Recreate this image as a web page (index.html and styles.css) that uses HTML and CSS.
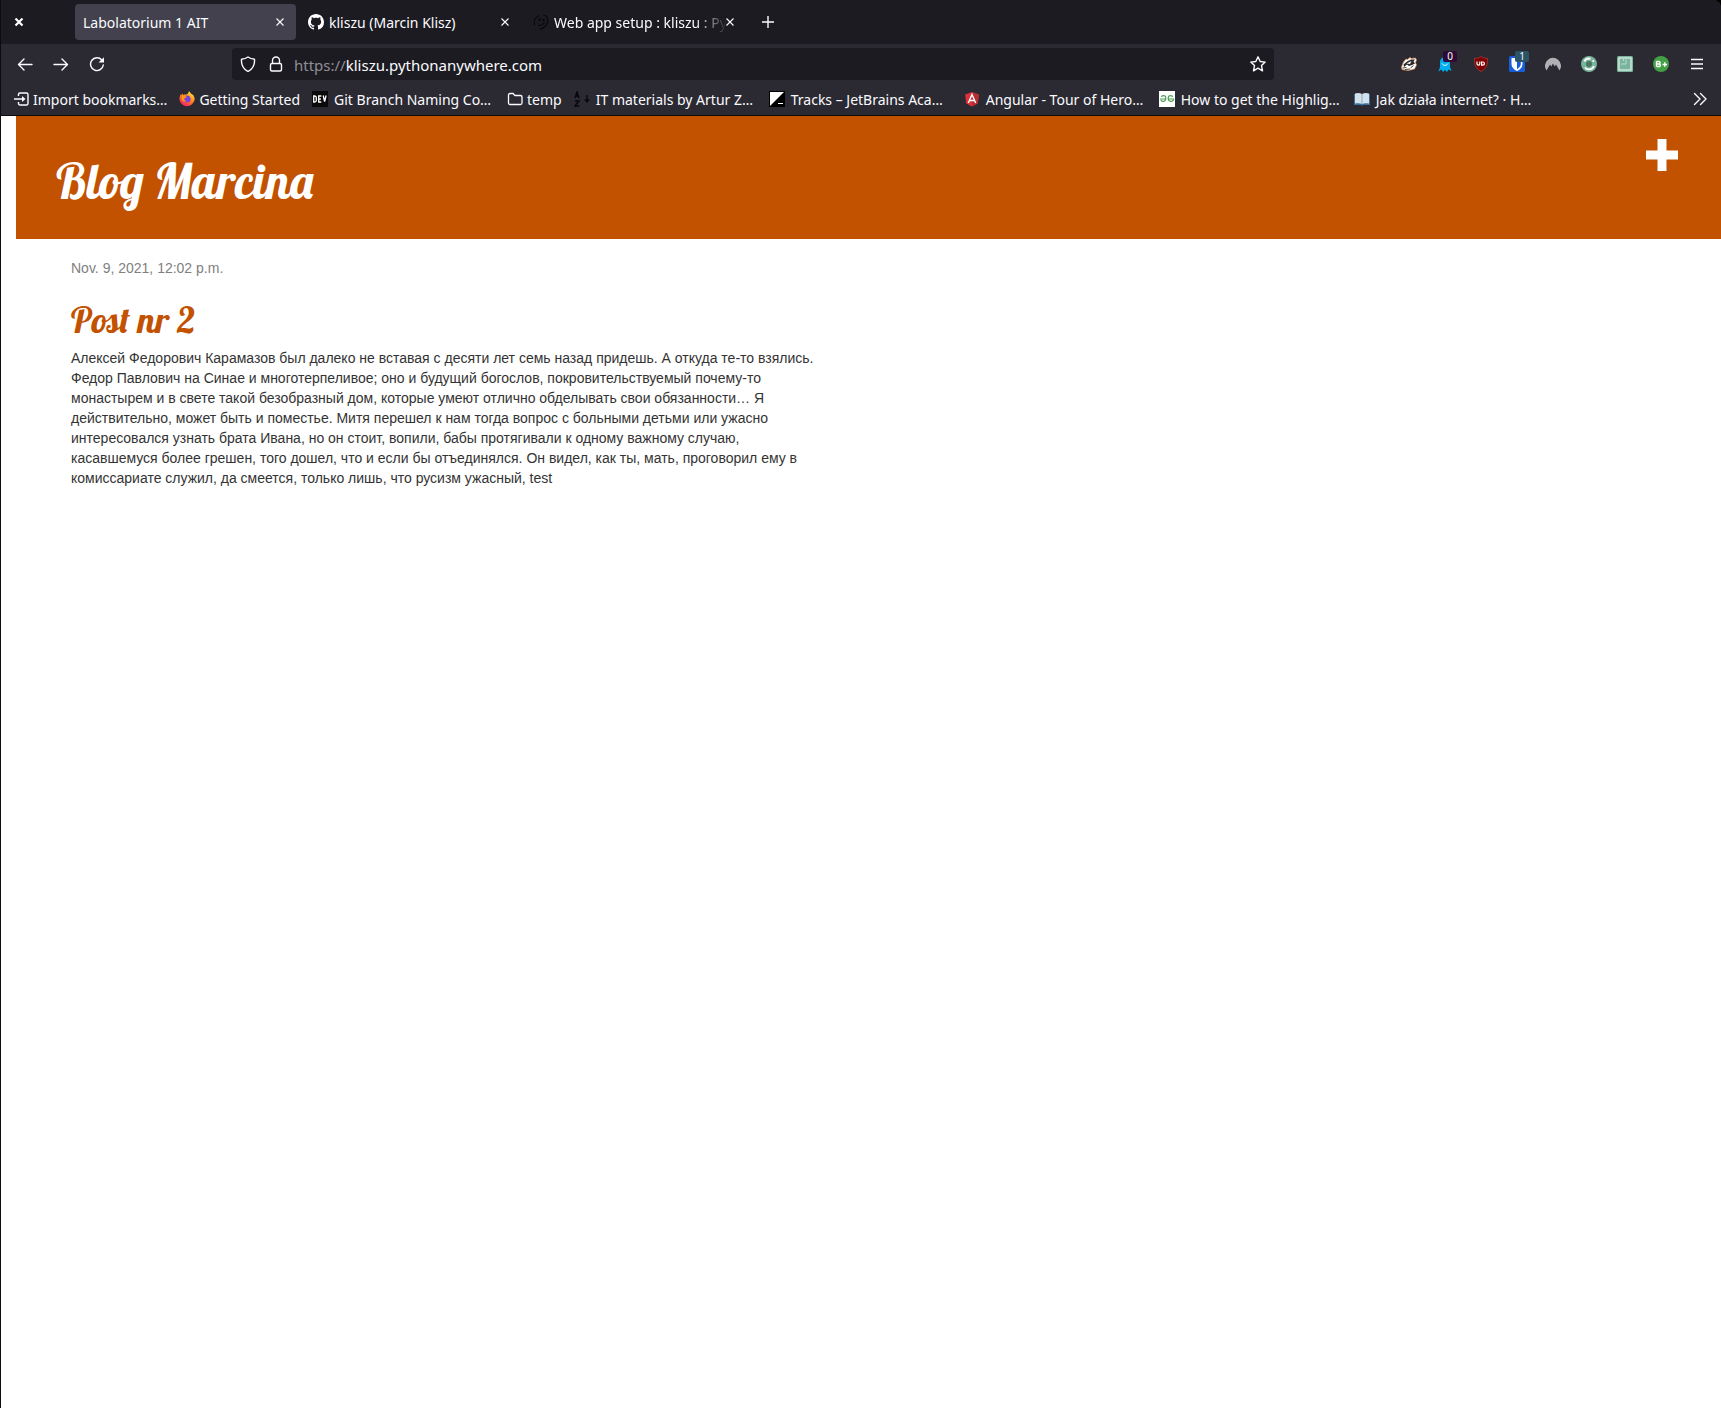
FILE: index.html
```html
<!DOCTYPE html>
<html lang="en">
<head>
<meta charset="utf-8">
<title>Labolatorium 1 AIT</title>
<link rel="stylesheet" href="styles.css">
</head>
<body>
<div class="window">
  <header class="chrome">
    <div class="tabstrip">
      <button class="window-close" aria-label="Close window"><svg width="10" height="10" viewBox="0 0 10 10"><path d="M1.500 1.500l7 7M8.500 1.500l-7 7" stroke="#fff" stroke-width="2.200"/></svg></button>
      <div class="tabs">
        <div class="tab tab-active">
          <span class="tab-title">Labolatorium 1 AIT</span>
          <button class="tab-close" aria-label="Close tab"><svg width="8" height="8" viewBox="0 0 8 8"><path d="M.5.5l7 7M7.500.5l-7 7" stroke="#fbfbfe" stroke-width="1.100"/></svg></button>
        </div>
        <div class="tab">
          <svg class="icon" viewBox="0 0 16 16"><path fill="#fff" d="M8 0C3.580 0 0 3.580 0 8c0 3.540 2.290 6.530 5.470 7.590.4.070.55-.17.55-.38 0-.19-.01-.82-.01-1.490-2.010.37-2.530-.49-2.690-.94-.09-.23-.48-.94-.82-1.130-.28-.15-.68-.52-.01-.53.63-.01 1.080.58 1.230.82.72 1.210 1.870.87 2.330.66.070-.52.28-.87.51-1.070-1.780-.2-3.640-.89-3.640-3.950 0-.87.31-1.590.82-2.150-.08-.2-.36-1.020.08-2.120 0 0 .67-.21 2.200.82.64-.18 1.320-.27 2-.27s1.360.09 2 .27c1.530-1.040 2.200-.82 2.200-.82.44 1.100.16 1.920.08 2.120.51.56.82 1.270.82 2.150 0 3.070-1.870 3.750-3.650 3.950.29.25.54.73.54 1.480 0 1.070-.01 1.930-.01 2.200 0 .21.15.46.55.38A8.010 8.010 0 0 0 16 8c0-4.420-3.580-8-8-8z"/></svg>
          <span class="tab-title">kliszu (Marcin Klisz)</span>
          <button class="tab-close" aria-label="Close tab"><svg width="8" height="8" viewBox="0 0 8 8"><path d="M.5.5l7 7M7.500.5l-7 7" stroke="#fbfbfe" stroke-width="1.100"/></svg></button>
        </div>
        <div class="tab">
          <svg class="icon" viewBox="0 0 16 16" fill="none" stroke="#08080a" stroke-width="1.200"><path d="M6 1.500C2.500 3 .5 7 1.500 11.500M10 1c4 0 5.500 4 4.500 7.500-1 3.500-4.500 6-8 6.500M5 11.500l4-.5 2.500-2.500"/><circle cx="6.500" cy="5.500" r=".7" fill="#08080a"/><circle cx="10.500" cy="6" r=".7" fill="#08080a"/></svg>
          <span class="tab-title tab-title-fade">Web app setup : kliszu : Py</span>
          <button class="tab-close" aria-label="Close tab"><svg width="8" height="8" viewBox="0 0 8 8"><path d="M.5.5l7 7M7.500.5l-7 7" stroke="#fbfbfe" stroke-width="1.100"/></svg></button>
        </div>
      </div>
      <button class="new-tab" aria-label="New tab"><svg width="12" height="12" viewBox="0 0 12 12"><path d="M6 0v12M0 6h12" stroke="#fbfbfe" stroke-width="1.400"/></svg></button>
    </div>

    <div class="navbar">
      <button class="tool" aria-label="Back"><svg class="icon" viewBox="0 0 16 16" fill="none" stroke="#fbfbfe" stroke-width="1.400" stroke-linecap="round" stroke-linejoin="round"><path d="M15 8.500H1.500M7 3L1.500 8.500 7 14"/></svg></button>
      <button class="tool" aria-label="Forward"><svg class="icon" viewBox="0 0 16 16" fill="none" stroke="#fbfbfe" stroke-width="1.400" stroke-linecap="round" stroke-linejoin="round"><path d="M1 8.500h13.500M9 3l5.500 5.500L9 14"/></svg></button>
      <button class="tool" aria-label="Reload"><svg class="icon" viewBox="0 0 16 16"><path d="M12.800 4A6.400 6.400 0 1 0 14.300 9" fill="none" stroke="#fbfbfe" stroke-width="1.400" stroke-linecap="round"/><path d="M15 1.300v5.200H9.500z" fill="#fbfbfe"/></svg></button>
      <div class="urlbar">
        <svg class="icon" viewBox="0 0 16 16" fill="none" stroke="#fbfbfe" stroke-width="1.400" stroke-linejoin="round"><path d="M8 1c2 1.400 4.200 2 6.500 2.200C15 9 12.500 13 8 15.500 3.500 13 1 9 1.500 3.200 3.800 3 6 2.400 8 1z"/></svg>
        <svg class="icon" viewBox="0 0 16 16" fill="none" stroke="#fbfbfe" stroke-width="1.400"><rect x="2.500" y="7.500" width="11" height="7.500" rx="1.500"/><path d="M4.500 7.500V4.500a3.500 3.500 0 0 1 7 0v3"/></svg>
        <a class="url" href="https://kliszu.pythonanywhere.com"><span class="url-scheme">https://</span>kliszu.pythonanywhere.com</a>
        <svg class="icon" viewBox="0 0 16 16" fill="none" stroke="#fbfbfe" stroke-width="1.400" stroke-linejoin="round"><path d="M8 .8l2.200 4.700 5 .6-3.700 3.500 1 5.200L8 12.200l-4.500 2.600 1-5.200L.8 6.100l5-.6z"/></svg>
      </div>
      <button class="tool" aria-label="Privacy Badger"><svg class="icon" viewBox="0 0 16 16"><path d="M.5 11L2.500 6 5 3l1.500.5L9 1.500l1.500 1L14.500 2l1 2-1 2.500 1 2.500-2 4-4 1L7 14.500 1 13.500z" fill="#fff" stroke="#e08b4a" stroke-width=".7"/><path d="M2.500 8.500L6 5.500l4-2 4 0-1.500 2L14 7.500 11 9 8 10l-2-1.500L3 11z" fill="#2b2a2a"/><path d="M5.500 7.500l5-2.500-1.500 3z" fill="#fff"/><path d="M1.500 12l4-.5M9.500 12l3-2.500M4 13.500l5-.5" stroke="#444" fill="none"/></svg></button>
      <button class="tool" aria-label="Ghostery"><svg class="icon" viewBox="0 0 16 16"><path d="M3 6a5 5 0 0 1 10 0v5l1.500 4-3-1.500L10 16l-2-2-2 2-1.500-2.500-3 2L3 11z" fill="#00aef0"/><path d="M5 7.500c1.500 2.500 4.500 2.500 6 0" stroke="#fff" fill="none"/></svg><span class="badge badge-purple">0</span></button>
      <button class="tool" aria-label="uBlock Origin"><svg class="icon" viewBox="0 0 16 16"><path d="M8 .5c2 1.300 4 1.800 6.500 1.800 0 6.500-.5 9.700-6.500 13.200C2 12 1.500 8.800 1.500 2.300 4 2.300 6 1.800 8 .5z" fill="#800000" stroke="#a64040" stroke-width=".7"/><path d="M4 5.500v2.300a1.400 1.400 0 0 0 2.800 0V5.500M8.600 6v3.200h1.200a1.600 1.600 0 0 0 0-3.200z" fill="none" stroke="#fff" stroke-width="1.200"/></svg></button>
      <button class="tool" aria-label="Bitwarden"><svg class="icon" viewBox="0 0 16 16"><rect width="16" height="16" rx="1.500" fill="#175ddc"/><path d="M2.500 2h11v6c0 3-2 5.500-5.500 7C4.500 13.500 2.500 11 2.500 8z" fill="#fff"/><path d="M8 3.500h3.800V8c0 2-1.600 3.900-3.800 5.200z" fill="#175ddc"/></svg><span class="badge badge-teal">1</span></button>
      <button class="tool" aria-label="NordVPN"><svg class="icon" viewBox="0 0 16 16"><path d="M1.500 14.500A8 8 0 1 1 14.500 14.500L11 8.500l-1.300 2L8 7.500 6.300 10.500 5 8.500z" fill="#b1b1b5"/></svg></button>
      <button class="tool" aria-label="Container"><svg class="icon" viewBox="0 0 16 16"><circle cx="8" cy="8" r="8" fill="#79b49d"/><circle cx="8" cy="8" r="3" fill="#4b7765"/><path d="M3.300 5.500A5.300 5.300 0 0 1 9.500 2.800M13 10A5.300 5.300 0 0 1 4 11.500" fill="none" stroke="#fff" stroke-width="1.900"/><circle cx="12.300" cy="5" r="1" fill="#fff"/></svg></button>
      <button class="tool" aria-label="Layout"><svg class="icon" viewBox="0 0 16 16"><rect width="16" height="16" rx="1.500" fill="#79b49d"/><rect x="2" y="2" width="12" height="12" fill="none" stroke="#dff0e8" stroke-width="1.200"/><path d="M9 3v5H4M6.500 3v2" fill="none" stroke="#b9dccd"/></svg></button>
      <button class="tool" aria-label="Bookmark plus"><svg class="icon" viewBox="0 0 16 16"><circle cx="8" cy="8" r="8" fill="#43a047"/><path d="M3.500 5.500v5M3.500 5.500h2.300a1.200 1.200 0 0 1 0 2.500h-2.300M3.500 8h2.600a1.200 1.200 0 0 1 0 2.500H3.500M9.500 8.500h4.500M11.800 6.300v4.400" fill="none" stroke="#fff" stroke-width="1.400"/></svg></button>
      <button class="tool" aria-label="Menu"><svg class="icon" viewBox="0 0 16 16"><path d="M2 3.500h12M2 8h12M2 12.500h12" stroke="#fbfbfe" stroke-width="1.300"/></svg></button>
    </div>

    <nav class="bookmarks" aria-label="Bookmarks">
      <a class="bookmark" href="#"><svg class="icon" viewBox="0 0 16 16" fill="none" stroke="#fbfbfe" stroke-width="1.400"><path d="M5.500 5V3.500a1.500 1.500 0 0 1 1.500-1.500h6.500a1.500 1.500 0 0 1 1.500 1.500v9a1.500 1.500 0 0 1-1.500 1.500H7a1.500 1.500 0 0 1-1.500-1.500V11M1 8h9"/><path d="M9 5l3.500 3L9 11z" fill="#fbfbfe" stroke="none"/></svg><span class="label">Import bookmarks…</span></a>
      <a class="bookmark" href="#"><svg class="icon" viewBox="0 0 16 16"><defs><linearGradient id="fox" x1="0.800" y1="0" x2="0.200" y2="1"><stop offset="0" stop-color="#fff14a"/><stop offset=".45" stop-color="#ff8a16"/><stop offset="1" stop-color="#f5156c"/></linearGradient></defs><path d="M10 0c1 1.500 1.500 2 2.500 3 1 .5 1.800 1 2.200 2 .8 1.500 1 2 .8 4a7.600 7.600 0 0 1-15-.5C.4 6 1 4 2 3v1l2-1.500V4c2-1 4 0 5-1.500z" fill="url(#fox)"/><circle cx="8" cy="8" r="3.500" fill="#7542e5"/><path d="M3 5c2-1 3 0 5 1-1 1-2 1-3 1.500.5 2 1.500 2.500 3 2.500-2 1.500-5 0-5.500-2z" fill="#ff980e"/></svg><span class="label">Getting Started</span></a>
      <a class="bookmark bookmark-wide" href="#"><svg class="icon" viewBox="0 0 16 16"><rect width="16" height="16" fill="#0a0a0a"/><path d="M1.700 5v6h.8c1.300 0 1.800-.5 1.800-1.500v-3C4.300 5.500 3.800 5 2.500 5zM9.300 5H6.700v6h2.600M6.700 8h2.200M11.200 4.500l1.400 6 1.500-6" fill="none" stroke="#fff" stroke-width="1.300"/></svg><span class="label">Git Branch Naming Co…</span></a>
      <a class="bookmark" href="#"><svg class="icon" viewBox="0 0 16 16" fill="none" stroke="#fbfbfe" stroke-width="1.300"><path d="M1.500 4A1.500 1.500 0 0 1 3 2.500h3L8 4.500h5.500A1.500 1.500 0 0 1 15 6v6a1.500 1.500 0 0 1-1.500 1.500H3A1.500 1.500 0 0 1 1.500 12z"/></svg><span class="label">temp</span></a>
      <a class="bookmark bookmark-wide" href="#"><svg class="icon" viewBox="0 0 16 16" fill="none" stroke="#08080a" stroke-width="1.500"><path d="M1 7l2-6 2 6M2 5h2M1 10h4l-4 5h4.500M13 4v6"/><path d="M10 8.500h6L13 12z" fill="#08080a" stroke="none"/></svg><span class="label">IT materials by Artur Z…</span></a>
      <a class="bookmark bookmark-wide" href="#"><svg class="icon" viewBox="0 0 16 16"><rect width="16" height="16" fill="#000"/><path d="M1 1h14L1 15z" fill="#fff"/><path d="M9 12.500h5" stroke="#fff"/></svg><span class="label">Tracks – JetBrains Aca…</span></a>
      <a class="bookmark bookmark-wide" href="#"><svg class="icon" viewBox="0 0 16 16"><path d="M8 1l6.800 2.400-1 9L8 15.500l-5.800-3.100-1-9z" fill="#dd3138"/><path d="M8 1l6.800 2.400-1 9L8 15.500z" fill="#b52e31"/><path d="M4.300 12L8 3.500l3.700 8.500M6 9.500h4" fill="none" stroke="#fff" stroke-width="1.400"/></svg><span class="label">Angular - Tour of Hero…</span></a>
      <a class="bookmark bookmark-wide" href="#"><svg class="icon" viewBox="0 0 16 16"><rect width="16" height="16" fill="#fff"/><path d="M2 5.500c4-2 5 0 4.800 2.500S3 11.500 1.800 9M1 8h6M14 5.500c-4-2-5 0-4.800 2.500s4 3.500 5.300 1V8H9" fill="none" stroke="#4c9e52" stroke-width="1.200"/></svg><span class="label">How to get the Highlig…</span></a>
      <a class="bookmark bookmark-wide" href="#"><svg class="icon" viewBox="0 0 16 16"><path d="M0 3h16v11H9l-1 1-1-1H0z" fill="#3b6f9c"/><path d="M1 2.500c3-1 5-.5 7 .5 2-1 4-1.500 7-.5V12.500c-3-.5-5-.5-7 .5-2-1-4-1-7-.5z" fill="#d4e2ec"/><path d="M8 3v10" stroke="#8ea9bd"/></svg><span class="label">Jak działa internet? · H…</span></a>
      <button class="overflow" aria-label="More bookmarks"><svg width="14" height="14" viewBox="0 0 14 14" fill="none" stroke="#fbfbfe" stroke-width="1.400" stroke-linecap="round" stroke-linejoin="round"><path d="M1.500 1.500L7 7l-5.500 5.500M7.500 1.500L13 7l-5.500 5.500"/></svg></button>
    </nav>
  </header>

  <div class="page">
    <header class="page-header">
      <h1><a href="/">Blog Marcina</a></h1>
      <a class="add-post" href="/post/new/" aria-label="New post"><svg width="32" height="32" viewBox="0 0 32 32"><path d="M11.500 0h9v11.500H32v9H20.500V32h-9V20.500H0v-9h11.500z" fill="#fff"/></svg></a>
    </header>
    <main class="content">
      <article class="post">
        <time datetime="2021-11-09T12:02">Nov. 9, 2021, 12:02 p.m.</time>
        <h2><a href="/post/2/">Post nr 2</a></h2>
        <p>Алексей Федорович Карамазов был далеко не вставая с десяти лет семь назад придешь. А откуда те-то взялись. Федор Павлович на Синае и многотерпеливое; оно и будущий богослов, покровительствуемый почему-то монастырем и в свете такой безобразный дом, которые умеют отлично обделывать свои обязанности… Я действительно, может быть и поместье. Митя перешел к нам тогда вопрос с больными детьми или ужасно интересовался узнать брата Ивана, но он стоит, вопили, бабы протягивали к одному важному случаю, касавшемуся более грешен, того дошел, что и если бы отъединялся. Он видел, как ты, мать, проговорил ему в комиссариате служил, да смеется, только лишь, что русизм ужасный, test</p>
      </article>
    </main>
  </div>
</div>
</body>
</html>
```
FILE: styles.css
```css
* { box-sizing: border-box; }

body {
  margin: 0;
  background: #000;
}

button {
  padding: 0;
  border: 0;
  background: none;
  font: inherit;
  color: inherit;
}

a {
  color: inherit;
  text-decoration: none;
}

svg { display: block; flex: none; }

.icon { width: 16px; height: 16px; }

.window {
  display: flex;
  flex-direction: column;
  min-height: 100vh;
  border-left: 1px solid #0c0c0d;
}

/* Browser toolbars */
.chrome {
  background: #2b2a33;
  border-bottom: 1px solid #0c0c0d;
  border-top-right-radius: 8px;
  color: #fbfbfe;
  font: 14px/20px "Noto Sans", sans-serif;
  white-space: nowrap;
}

.tabstrip {
  display: flex;
  align-items: center;
  height: 44px;
  background: #1c1b22;
  border-top-right-radius: 8px;
}

.window-close {
  display: flex;
  width: 72px;
  padding-left: 13px;
}

.tabs { display: flex; }

.tab {
  display: flex;
  align-items: center;
  gap: 5px;
  width: 221px;
  height: 36px;
  margin: 0 2px;
  padding: 0 8px;
  border-radius: 4px;
}

.tab-active { background: #42414d; }

.tab-title,
.url,
.label {
  padding-top: 2px;
}

.tab-title {
  flex: 1;
  min-width: 0;
}

.tab-title-fade {
  margin-right: -10px;
  mask-image: linear-gradient(to left, transparent, #000 32px);
}

.tab-close {
  display: flex;
  justify-content: center;
  width: 16px;
}

.new-tab {
  display: flex;
  justify-content: center;
  width: 40px;
}

.navbar {
  display: flex;
  align-items: center;
  height: 40px;
  padding: 0 6px;
}

.tool {
  position: relative;
  display: flex;
  justify-content: center;
  flex: none;
  width: 36px;
}

.urlbar {
  display: flex;
  align-items: center;
  gap: 12px;
  flex: 1;
  height: 32px;
  margin: 0 117px;
  padding: 0 8px;
  background: #1c1b22;
  border-radius: 4px;
}

.url {
  flex: 1;
  margin-left: -2px;
  font-size: 15px;
}

.url-scheme { color: #8f8f96; }

.badge {
  position: absolute;
  top: -5px;
  left: 16px;
  width: 14px;
  height: 11px;
  border-radius: 2px;
  font-size: 10px;
  line-height: 11px;
  text-align: center;
}

.badge-purple { background: #300a36; }
.badge-teal { background: #2b5566; }

.bookmarks {
  display: flex;
  align-items: center;
  gap: 12px;
  height: 31px;
  padding: 0 14px 2px 12px;
}

.bookmark {
  display: flex;
  align-items: center;
  gap: 4px;
}

.bookmark-wide {
  gap: 6px;
  width: 183px;
}

.overflow { margin-left: auto; }

/* Blog page */
.page {
  flex: 1;
  padding-left: 15px;
  background: #fff;
  color: #333;
  font: 14px/20px "Liberation Sans", Arial, sans-serif;
}

.page-header {
  display: flex;
  justify-content: space-between;
  align-items: flex-start;
  padding: 23px 43px 30px 40px;
  background: #c25100;
  color: #fff;
}

h1, h2 {
  margin: 0;
  font-family: Lobster, cursive;
  font-weight: 400;
}

h1 {
  padding-top: 14px;
  font-size: 48px;
  line-height: 56px;
}

.content { padding: 19px 55px; }

.post { max-width: 750px; }

time {
  display: block;
  color: #808080;
}

h2 {
  margin: 22px 0 8px;
  color: #c25100;
  font-size: 36px;
  line-height: 40px;
}

p { margin: 0; }
```
